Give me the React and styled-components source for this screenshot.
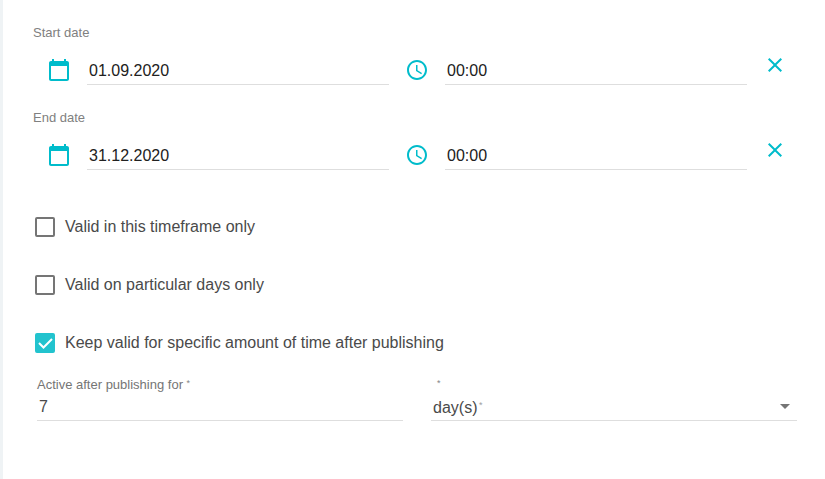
import React, { useState } from "react";
import styled, { createGlobalStyle } from "styled-components";

const CalendarIcon = () => (
	<Icon viewBox="0 0 24 24" aria-hidden="true">
		<path d="M20 3h-1V1h-2v2H7V1H5v2H4c-1.1 0-2 .9-2 2v16c0 1.1.9 2 2 2h16c1.1 0 2-.9 2-2V5c0-1.1-.9-2-2-2zm0 18H4V8h16v13z" />
	</Icon>
);

const ClockIcon = () => (
	<Icon viewBox="0 0 24 24" aria-hidden="true">
		<path d="M11.99 2C6.47 2 2 6.48 2 12s4.47 10 9.99 10C17.52 22 22 17.52 22 12S17.52 2 11.99 2zM12 20c-4.42 0-8-3.58-8-8s3.58-8 8-8 8 3.58 8 8-3.58 8-8 8zm.5-13H11v6l5.25 3.15.75-1.23-4.5-2.67z" />
	</Icon>
);

const CloseIcon = () => (
	<Icon viewBox="0 0 24 24" aria-hidden="true">
		<path d="M19 6.41L17.59 5 12 10.59 6.41 5 5 6.41 10.59 12 5 17.59 6.41 19 12 13.41 17.59 19 19 17.59 13.41 12z" />
	</Icon>
);

function DateRow({ id, label, initialDate, initialTime }) {
	const [date, setDate] = useState(initialDate);
	const [time, setTime] = useState(initialTime);

	const clear = () => {
		setDate("");
		setTime("");
	};

	return (
		<DateGroup>
			<DateLabel htmlFor={id}>{label}</DateLabel>
			<DateFields>
				<Picker>
					<IconButton type="button" aria-label={`Pick ${label}`}>
						<CalendarIcon />
					</IconButton>
					<TextInput
						id={id}
						value={date}
						onChange={(e) => setDate(e.target.value)}
					/>
				</Picker>
				<Picker>
					<IconButton type="button" aria-label={`Pick ${label} time`}>
						<ClockIcon />
					</IconButton>
					<TextInput
						aria-label={`${label} time`}
						value={time}
						onChange={(e) => setTime(e.target.value)}
					/>
				</Picker>
				<IconButton
					type="button"
					aria-label={`Clear ${label}`}
					onClick={clear}
				>
					<CloseIcon />
				</IconButton>
			</DateFields>
		</DateGroup>
	);
}

function CheckOption({ label, defaultChecked }) {
	return (
		<CheckLabel>
			<CheckWrap>
				<CheckInput type="checkbox" defaultChecked={defaultChecked} />
				<CheckMark viewBox="0 0 20 20" aria-hidden="true">
					<path d="M4 10l4.5 4.5L17 6" />
				</CheckMark>
			</CheckWrap>
			{label}
		</CheckLabel>
	);
}

export default function App() {
	const [amount, setAmount] = useState("7");

	return (
		<>
			<GlobalStyle />
			<Panel>
				<Dates>
					<DateRow
						id="start-date"
						label="Start date"
						initialDate="01.09.2020"
						initialTime="00:00"
					/>
					<DateRow
						id="end-date"
						label="End date"
						initialDate="31.12.2020"
						initialTime="00:00"
					/>
				</Dates>
				<Options>
					<CheckOption label="Valid in this timeframe only" />
					<CheckOption label="Valid on particular days only" />
					<CheckOption
						label="Keep valid for specific amount of time after publishing"
						defaultChecked
					/>
				</Options>
				<Duration>
					<Field>
						<FieldLabel htmlFor="amount">
							Active after publishing for <Star>*</Star>
						</FieldLabel>
						<TextInput
							id="amount"
							$muted
							value={amount}
							onChange={(e) => setAmount(e.target.value)}
						/>
					</Field>
					<Field>
						<FieldLabel htmlFor="unit" $indent>
							<Star>*</Star>
						</FieldLabel>
						<SelectWrap>
							<Select id="unit" aria-label="Unit" defaultValue="day">
								<option value="day">day(s)</option>
								<option value="week">week(s)</option>
								<option value="month">month(s)</option>
							</Select>
							<SelectStar>*</SelectStar>
							<Arrow viewBox="0 0 10 5" aria-hidden="true">
								<path d="M0 0h10L5 5z" />
							</Arrow>
						</SelectWrap>
					</Field>
				</Duration>
			</Panel>
		</>
	);
}

const GlobalStyle = createGlobalStyle`
	* {
		box-sizing: border-box;
	}
	body {
		margin: 0;
		background: #fff;
		font-family: "Liberation Sans", Arial, sans-serif;
		font-size: 16px;
		color: #4a4a4a;
	}
`;

const Panel = styled.form`
	min-height: 100vh;
	padding: 25px 28px 24px 30px;
	border-left: 3px solid #eff3f5;
`;

const Dates = styled.div`
	display: flex;
	flex-direction: column;
	gap: 25px;
`;

const DateGroup = styled.div`
	display: flex;
	flex-direction: column;
	gap: 12px;
`;

const DateLabel = styled.label`
	align-self: flex-start;
	font-size: 13px;
	line-height: 16px;
	color: #808080;
`;

const DateFields = styled.div`
	display: flex;
	align-items: flex-start;
	gap: 16px;
	padding: 0 10px 0 14px;
`;

const Picker = styled.div`
	flex: 1;
	min-width: 0;
	display: flex;
	gap: 16px;
	padding-top: 5px;
`;

const Icon = styled.svg`
	display: block;
	width: 24px;
	height: 24px;
	fill: currentColor;
`;

const IconButton = styled.button`
	flex: none;
	align-self: flex-start;
	padding: 0;
	border: 0;
	background: none;
	color: #00bccb;
	cursor: pointer;
`;

const TextInput = styled.input`
	width: 100%;
	min-width: 0;
	height: 27px;
	padding: 0 2px;
	border: 0;
	border-bottom: 1px solid #dedede;
	border-radius: 0;
	background: none;
	font: inherit;
	color: ${(props) => (props.$muted ? "#4a4a4a" : "#212121")};
	outline: none;
	&:focus {
		border-color: #00bccb;
	}
`;

const Options = styled.div`
	display: flex;
	flex-direction: column;
	align-items: flex-start;
	gap: 34px;
	padding: 45px 2px 0;
`;

const CheckLabel = styled.label`
	display: flex;
	align-items: center;
	gap: 10px;
	line-height: 24px;
	cursor: pointer;
`;

const CheckWrap = styled.span`
	display: grid;
	flex: none;
	> * {
		grid-area: 1 / 1;
	}
`;

const CheckInput = styled.input`
	appearance: none;
	width: 20px;
	height: 20px;
	margin: 0;
	border: 2px solid #757575;
	border-radius: 2px;
	cursor: pointer;
	&:checked {
		border-color: #22c3ce;
		background: #22c3ce;
	}
`;

const CheckMark = styled.svg`
	width: 20px;
	height: 20px;
	fill: none;
	stroke: #fff;
	stroke-width: 2;
	pointer-events: none;
	${CheckInput}:not(:checked) + & {
		visibility: hidden;
	}
`;

const Duration = styled.div`
	display: grid;
	grid-template-columns: 1fr 1fr;
	gap: 28px;
	padding: 21px 0 0 4px;
`;

const Field = styled.div`
	display: flex;
	flex-direction: column;
	min-width: 0;
`;

const FieldLabel = styled.label`
	align-self: flex-start;
	height: 18px;
	font-size: 13px;
	line-height: 18px;
	color: #757575;
	padding-left: ${(props) => (props.$indent ? "6px" : "0")};
`;

const Star = styled.span`
	font-size: 9px;
	line-height: 14px;
	vertical-align: top;
	color: #858585;
`;

const SelectWrap = styled.div`
	position: relative;
	height: 27px;
	border-bottom: 1px solid #dedede;
`;

const Select = styled.select`
	appearance: none;
	display: block;
	width: 100%;
	height: 100%;
	padding: 0 24px 0 2px;
	border: 0;
	background: none;
	font: inherit;
	color: inherit;
	outline: none;
	cursor: pointer;
`;

/* required marker, sits right after the selected unit */
const SelectStar = styled.span`
	position: absolute;
	top: 6px;
	left: 48px;
	font-size: 9px;
	line-height: 10px;
	color: #9e9e9e;
	pointer-events: none;
`;

const Arrow = styled.svg`
	position: absolute;
	top: 10px;
	right: 7px;
	width: 10px;
	height: 5px;
	fill: #757575;
	pointer-events: none;
`;
